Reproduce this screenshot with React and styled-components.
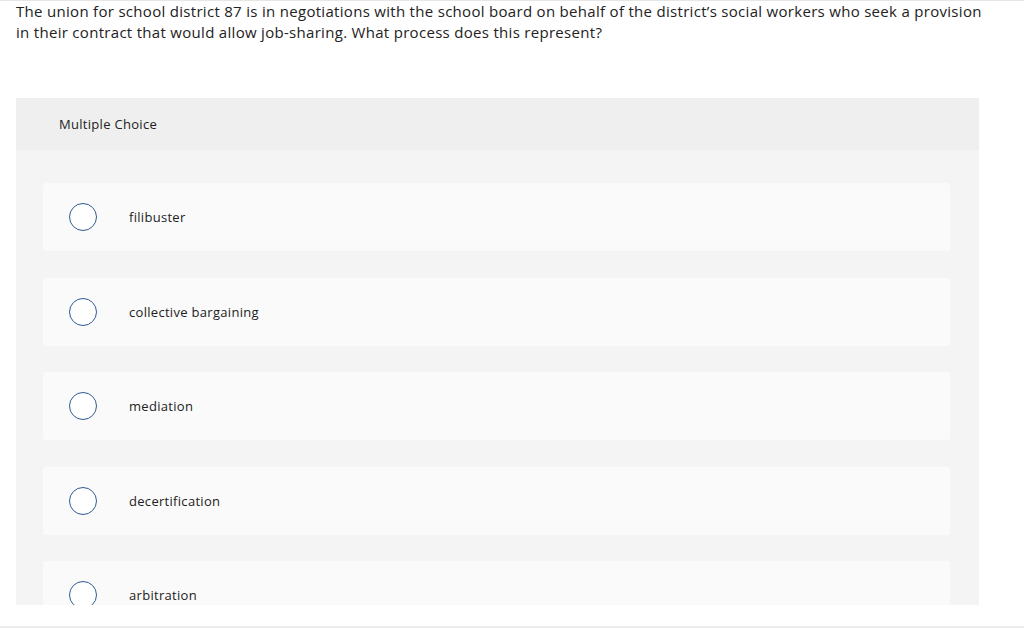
import React from "react";
import styled, { createGlobalStyle } from "styled-components";

const GlobalStyle = createGlobalStyle`
  html, body {
    margin: 0;
    padding: 0;
    background: #ffffff;
  }
  body {
    font-family: "Open Sans", "Liberation Sans", sans-serif;
    color: #222222;
    font-variant-ligatures: none;
    letter-spacing: 0.3px;
  }
`;

const Page = styled.div`
  width: 1024px;
  height: 628px;
  box-sizing: border-box;
  border-top: 1px solid #e6e6e6;
  display: flex;
  flex-direction: column;
`;

const Question = styled.p`
  margin: 0;
  padding: 0 16px;
  width: 970px;
  font-size: 15px;
  line-height: 21px;
  color: #222222;
`;

const Scroller = styled.div`
  margin: 55px 0 0 16px;
  width: 963px;
  height: 507px;
  overflow: hidden;
  flex-shrink: 0;
`;

const Panel = styled.section`
  background: #f4f4f4;
  border-radius: 2px;
`;

const PanelHeader = styled.div`
  height: 52px;
  padding-left: 43px;
  display: flex;
  align-items: center;
  background: #efefef;
  font-size: 13px;
  color: #222222;
`;

const Options = styled.div`
  display: flex;
  flex-direction: column;
  gap: 26.5px;
  padding: 33px 29px 40px 27px;
`;

const Option = styled.label`
  height: 68px;
  display: flex;
  align-items: center;
  background: #fafafa;
  border-radius: 3px;
  padding-left: 26px;
  font-size: 13px;
  color: #222222;
  cursor: pointer;
`;

const Radio = styled.span`
  width: 28px;
  height: 28px;
  border-radius: 50%;
  border: 1.3px solid #2f5b91;
  background: #ffffff;
  box-sizing: border-box;
  flex-shrink: 0;
  margin-right: 32px;
`;

const Footer = styled.div`
  margin-top: auto;
  height: 2px;
  background: #ececec;
`;

const choices = [
  "filibuster",
  "collective bargaining",
  "mediation",
  "decertification",
  "arbitration",
];

export default function App() {
  return (
    <>
      <GlobalStyle />
      <Page>
        <Question>
          The union for school district 87 is in negotiations with the school
          board on behalf of the district’s social workers who seek a provision
          in their contract that would allow job-sharing. What process does
          this represent?
        </Question>
        <Scroller>
          <Panel>
            <PanelHeader>Multiple Choice</PanelHeader>
            <Options>
              {choices.map((c) => (
                <Option key={c}>
                  <Radio />
                  {c}
                </Option>
              ))}
            </Options>
          </Panel>
        </Scroller>
        <Footer />
      </Page>
    </>
  );
}
